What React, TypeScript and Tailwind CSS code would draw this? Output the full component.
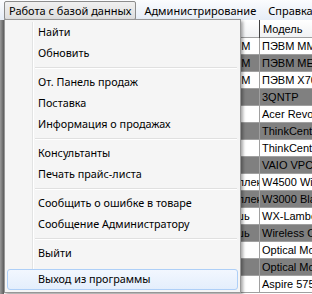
import React from "react"

const menuItems: string[] = [
  "Найти",
  "Обновить",
  "-",
  "От. Панель продаж",
  "Поставка",
  "Информация о продажах",
  "-",
  "Консультанты",
  "Печать прайс-листа",
  "-",
  "Сообщить о ошибке в товаре",
  "Сообщение Администратору",
  "-",
  "Выйти",
]

const rows = [
  { name: "Системный блок", type: "ПЭВМ", model: "ПЭВМ MMX 4000" },
  { name: "Системный блок", type: "ПЭВМ", model: "ПЭВМ ME5000" },
  { name: "Системный блок", type: "ПЭВМ", model: "ПЭВМ X700" },
  { name: "Неттоп", type: "ПК", model: "3QNTP" },
  { name: "Неттоп", type: "ПК", model: "Acer Revo 70" },
  { name: "Моноблок", type: "ПК", model: "ThinkCentre M58" },
  { name: "Моноблок", type: "ПК", model: "ThinkCentre A70" },
  { name: "Ноутбук", type: "ПК", model: "VAIO VPCJ1" },
  { name: "Клавиатура", type: "Комплект", model: "W4500 Wireless" },
  { name: "Клавиатура", type: "Комплект", model: "W3000 Black" },
  { name: "Манипулятор", type: "Мышь", model: "WX-Lamborghini" },
  { name: "Манипулятор", type: "Мышь", model: "Wireless Optical" },
  { name: "Манипулятор", type: "", model: "Optical Mouse" },
  { name: "Манипулятор", type: "", model: "Optical Mouse" },
  { name: "Ноутбук", type: "", model: "Aspire 5750G" },
]

export default function App() {
  return (
    <div className="relative w-[312px] h-[294px] overflow-hidden bg-white select-none">
      {/* menu bar */}
      <div className="flex h-[20px] items-stretch whitespace-nowrap bg-gradient-to-b from-[#fbfcfe] to-[#e6edf6] text-[11px] text-black font-['Noto_Sans',sans-serif]">
        <div className="ml-[4px] mt-[1px] flex shrink-0 items-center rounded-[2px] border border-[#8c8c8c] bg-gradient-to-b from-[#f0f0f0] to-[#dedede] px-[4px] leading-none">
          Работа с базой данных
        </div>
        <div className="ml-[3px] flex shrink-0 items-center px-[5px] leading-none">Администрирование</div>
        <div className="ml-[2px] flex shrink-0 items-center px-[5px] leading-none">Справка</div>
      </div>

      {/* window body with grid */}
      <div className="flex h-[274px]">
        <div className="w-[4px] shrink-0 bg-gradient-to-r from-[#9a9a9a] to-[#5e5e5e]" />
        <div className="flex-1 font-['Liberation_Sans',Arial,sans-serif] text-[11px] text-black">
          <div className="grid h-[18px] grid-cols-[212px_44px_1fr] border-b border-[#a0a0a0] bg-gradient-to-b from-white to-[#f1f2f4]">
            <div className="border-r border-[#a0a0a0] px-[3px] leading-[18px]">Наименование</div>
            <div className="border-r border-[#404040] px-[3px] leading-[18px]">Тип</div>
            <div className="px-[3px] leading-[18px]">Модель</div>
          </div>
          {rows.map((r, i) => (
            <div
              key={i}
              className={
                "grid h-[17px] grid-cols-[212px_44px_1fr] border-b border-[#a0a0a0] " +
                (i % 2 === 1 ? "bg-[#808080]" : "bg-white")
              }
            >
              <div className="overflow-hidden whitespace-nowrap border-r border-[#a0a0a0] px-[3px] leading-[16px]">{r.name}</div>
              <div className="overflow-hidden whitespace-nowrap border-r border-[#a0a0a0] pl-[2px] leading-[16px]">{r.type}</div>
              <div className="overflow-hidden whitespace-nowrap px-[2px] leading-[16px]">{r.model}</div>
            </div>
          ))}
        </div>
      </div>

      {/* dropdown menu */}
      <div className="absolute left-[4px] top-[19px] w-[237px] border border-[#979797] bg-[#f5f5f5] p-[2px] shadow-[2px_2px_3px_rgba(0,0,0,0.35)] font-['Noto_Sans',sans-serif] text-[10.8px] text-black whitespace-nowrap">
        <div className="relative flex flex-col">
          <div className="absolute left-[25px] top-0 bottom-0 w-[2px] border-l border-[#e2e3e3] bg-white" />
          {menuItems.map((t, i) =>
            t === "-" ? (
              <div key={i} className="flex h-[8px] items-center pl-[28px] pr-[1px]">
                <div className="h-[2px] w-full border-t border-[#e0e0e0] bg-white" />
              </div>
            ) : (
              <div key={i} className="relative flex h-[21px] items-center pl-[31px] leading-none">
                {t}
              </div>
            )
          )}
          <div className="relative mt-[5px] flex h-[21px] items-center rounded-[3px] border border-[#aecff7] bg-gradient-to-b from-[#f2f7fe] to-[#e4eefc] pl-[30px] leading-none">
            Выход из программы
          </div>
        </div>
      </div>
    </div>
  )
}
